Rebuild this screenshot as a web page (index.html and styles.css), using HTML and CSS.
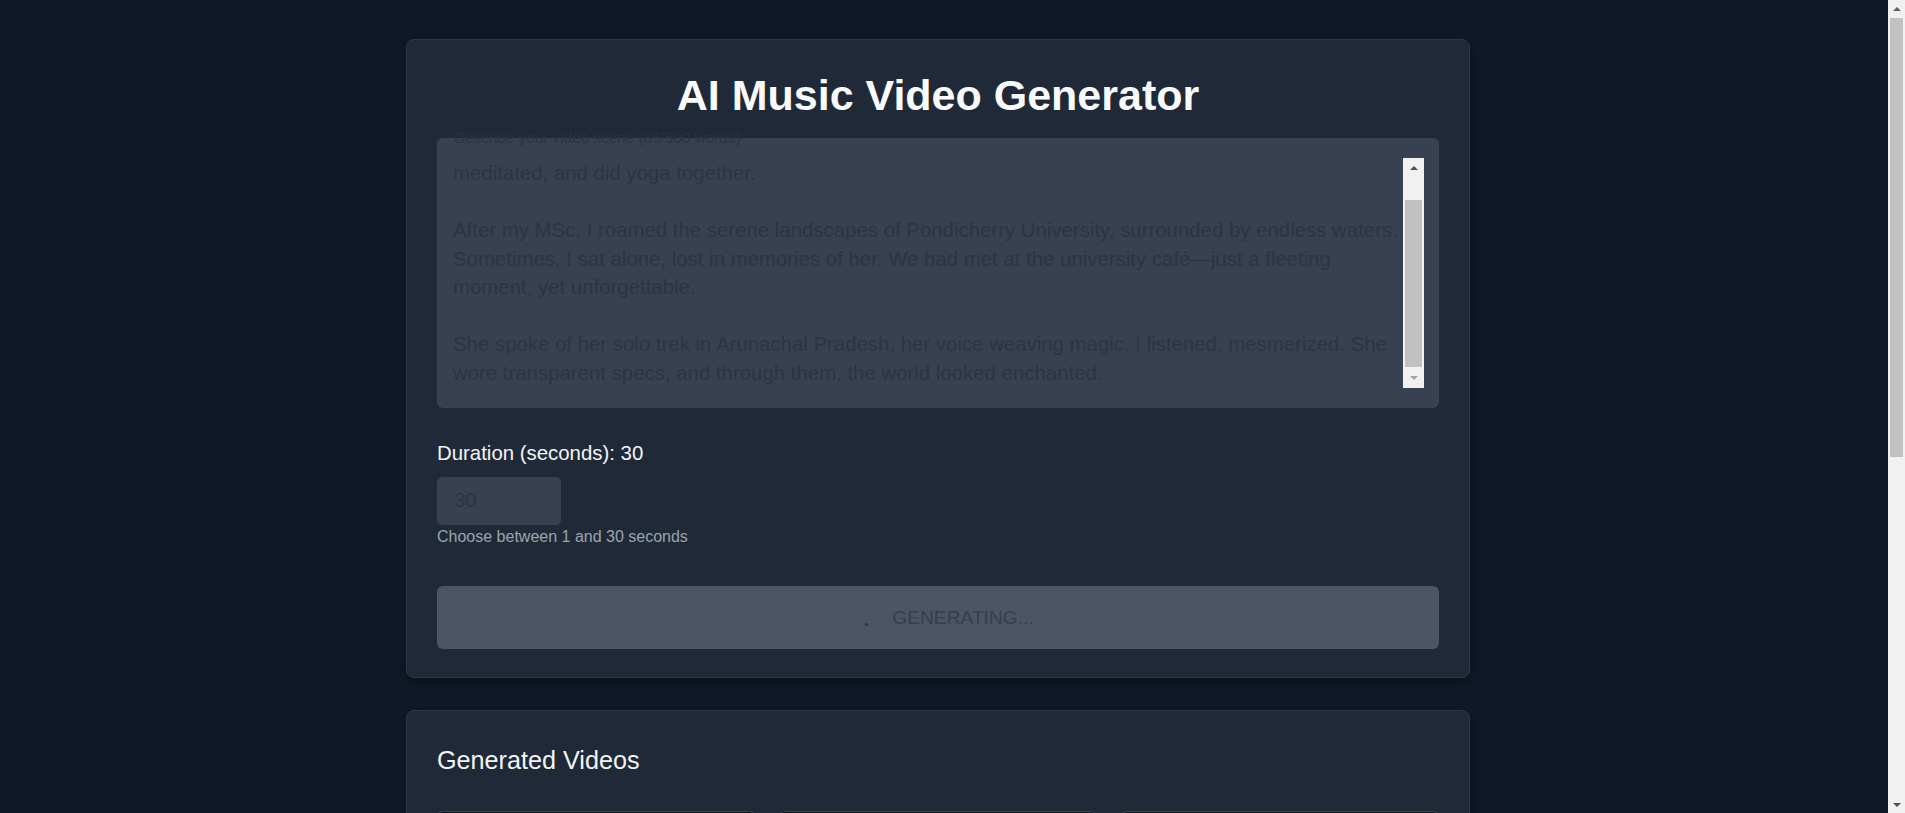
FILE: index.html
```html
<!DOCTYPE html>
<html lang="en">
<head>
<meta charset="utf-8">
<title>AI Music Video Generator</title>
<link rel="stylesheet" href="styles.css">
</head>
<body>
<main class="page">
  <section class="card generator">
    <h1 class="title">AI Music Video Generator</h1>
    <div class="scene-field">
      <label class="scene-label" for="scene">Describe your video scene (85/500 words)</label>
      <textarea id="scene" class="scene">
In those early mornings by the sea, she and I watched the sunrise together, walked, talked, laughed, meditated, and did yoga together.

After my MSc, I roamed the serene landscapes of Pondicherry University, surrounded by endless waters. Sometimes, I sat alone, lost in memories of her. We had met at the university café—just a fleeting moment, yet unforgettable.

She spoke of her solo trek in Arunachal Pradesh, her voice weaving magic. I listened, mesmerized. She wore transparent specs, and through them, the world looked enchanted.</textarea>
      <div class="field-scrollbar" aria-hidden="true">
        <span class="fsb-btn"><span class="arrow-up arrow-dark"></span></span>
        <span class="fsb-track"><span class="fsb-thumb"></span></span>
        <span class="fsb-btn"><span class="arrow-down arrow-light"></span></span>
      </div>
    </div>
    <div class="duration-field">
      <label class="duration-label" for="duration">Duration (seconds): 30</label>
      <input id="duration" class="duration-input" type="number" min="1" max="30" value="30">
      <p class="hint">Choose between 1 and 30 seconds</p>
    </div>
    <button class="generate" type="button"><span class="spinner"></span><span class="generate-text">Generating...</span></button>
  </section>

  <section class="card videos">
    <h2 class="videos-title">Generated Videos</h2>
    <div class="video-grid">
      <article class="video-card"><div class="video-thumb"></div><div class="video-info"><p class="video-title">Sunrise by the sea</p><p class="video-meta">30 seconds</p></div></article>
      <article class="video-card"><div class="video-thumb"></div><div class="video-info"><p class="video-title">Pondicherry University</p><p class="video-meta">30 seconds</p></div></article>
      <article class="video-card"><div class="video-thumb"></div><div class="video-info"><p class="video-title">Arunachal trek</p><p class="video-meta">20 seconds</p></div></article>
      <article class="video-card"><div class="video-thumb"></div><div class="video-info"><p class="video-title">University café</p><p class="video-meta">15 seconds</p></div></article>
      <article class="video-card"><div class="video-thumb"></div><div class="video-info"><p class="video-title">Endless waters</p><p class="video-meta">30 seconds</p></div></article>
      <article class="video-card"><div class="video-thumb"></div><div class="video-info"><p class="video-title">Enchanted world</p><p class="video-meta">25 seconds</p></div></article>
    </div>
  </section>
</main>

<div class="page-scrollbar" aria-hidden="true">
  <span class="psb-btn"><span class="arrow-up-sm arrow-mid"></span></span>
  <span class="psb-track"><span class="psb-thumb"></span></span>
  <span class="psb-btn"><span class="arrow-down-sm arrow-dark"></span></span>
</div>
<script src="script.js"></script>
</body>
</html>
```

FILE: styles.css
```css
* { box-sizing: border-box; }

html { background: #111827; }

body {
  margin: 0;
  background: #111827;
  font-family: "Liberation Sans", Arial, sans-serif;
  font-size: 20.4px;
  line-height: 1.5;
  color: #f3f4f6;
}

.page {
  display: flex;
  flex-direction: column;
  align-items: center;
  gap: 32px;
  padding: 39px 29px 39px 0;
}

.card {
  width: 1064px;
  background: #1f2937;
  border: 1px solid #2e3848;
  border-radius: 8px;
  box-shadow: 0 4px 12px rgba(0, 0, 0, 0.35);
}

.generator { padding: 30px 30px 28px; }

.title {
  margin: 0 0 17.5px;
  font-size: 43px;
  line-height: 50px;
  font-weight: 700;
  text-align: center;
  color: #f9fafb;
}

/* scene textarea */
.scene-field {
  position: relative;
  display: flex;
  background: #374151;
  border-radius: 6px;
  padding: 20px 15px 20px 16px;
}

.scene-label {
  position: absolute;
  top: -8px;
  left: 17px;
  font-size: 15.3px;
  line-height: 16px;
  color: #2b3341;
}

.scene {
  display: block;
  flex: 1;
  min-width: 0;
  height: 230px;
  margin: 0;
  padding: 0;
  border: 0;
  background: transparent;
  resize: none;
  outline: none;
  overflow: hidden;
  font-family: inherit;
  font-size: 20.4px;
  line-height: 1.4;
  color: #2c3442;
}

.field-scrollbar {
  flex: none;
  display: flex;
  flex-direction: column;
  width: 21px;
  height: 230px;
  background: #f1f1f1;
}
.fsb-btn {
  flex: none;
  display: flex;
  align-items: center;
  justify-content: center;
  height: 21px;
}
.fsb-track {
  flex: 1;
  display: flex;
  flex-direction: column;
  padding: 21px 2px 0;
}
.fsb-thumb {
  flex: 1;
  background: #c1c1c1;
}

.arrow-up,
.arrow-down {
  width: 0;
  height: 0;
  border-left: 4.5px solid transparent;
  border-right: 4.5px solid transparent;
}
.arrow-up { border-bottom: 4.5px solid; margin-bottom: 1px; }
.arrow-down { border-top: 4.5px solid; margin-top: 1px; }

.arrow-up-sm,
.arrow-down-sm {
  width: 0;
  height: 0;
  border-left: 4px solid transparent;
  border-right: 4px solid transparent;
}
.arrow-up-sm { border-bottom: 4px solid; }
.arrow-down-sm { border-top: 4px solid; }

.arrow-dark { color: #505050; }
.arrow-mid { color: #606060; }
.arrow-light { color: #a3a3a3; }

/* duration */
.duration-field { margin-top: 30px; }

.duration-label {
  display: block;
  line-height: 30px;
  margin-bottom: 9px;
  color: #f3f4f6;
}

.duration-input {
  display: block;
  width: 124px;
  height: 48px;
  margin: 0;
  padding: 0 16px 0 17px;
  border: 0;
  border-radius: 5px;
  background: #374151;
  color: #2c3442;
  font-family: inherit;
  font-size: 20.4px;
  outline: none;
}

.hint {
  margin: 0;
  font-size: 16px;
  line-height: 24px;
  color: #9ca3af;
}

/* generate button */
.generate {
  display: flex;
  align-items: center;
  justify-content: center;
  width: 100%;
  height: 63px;
  margin: 37.5px 0 0;
  padding: 0;
  border: 0;
  border-radius: 6px;
  background: #4b5563;
  color: #363f4d;
  font-family: inherit;
  font-size: 19.2px;
  text-transform: uppercase;
  cursor: not-allowed;
}

.spinner {
  display: flex;
  align-items: flex-end;
  width: 20px;
  height: 20px;
  margin: 0 15px;
  padding: 0 0 2px 8px;
}
.spinner::before {
  content: "";
  width: 3px;
  height: 3px;
  border-radius: 50%;
  background: #2b323e;
}

/* videos */
.videos { padding: 30px; }

.videos-title {
  margin: 0 0 32px;
  font-size: 25.2px;
  line-height: 38px;
  font-weight: 400;
  color: #f3f4f6;
}

.video-grid {
  display: grid;
  grid-template-columns: repeat(3, 1fr);
  gap: 24px;
}

.video-card {
  background: #2b3544;
  border: 1px solid #374151;
  border-radius: 6px;
  overflow: hidden;
}

.video-thumb {
  aspect-ratio: 16 / 9;
  background: #0f141d;
}

.video-info { padding: 16px; }

.video-title {
  margin: 0 0 4px;
  font-size: 16px;
  line-height: 24px;
  color: #e5e7eb;
}

.video-meta {
  margin: 0;
  font-size: 14px;
  line-height: 20px;
  color: #9ca3af;
}

/* window scrollbar drawn over the right edge */
.page-scrollbar {
  position: fixed;
  top: 0;
  right: 0;
  display: flex;
  flex-direction: column;
  width: 17px;
  height: 100vh;
  background: #f1f1f1;
}
.psb-btn {
  flex: none;
  display: flex;
  align-items: center;
  justify-content: center;
  height: 17px;
}
.psb-track {
  flex: 1;
  display: flex;
  flex-direction: column;
  padding: 1px 2px 0;
}
.psb-thumb {
  height: 439px;
  background: #c1c1c1;
}
```

FILE: script.js
```js
var scene = document.querySelector('.scene');
if (scene) {
  scene.scrollTop = scene.scrollHeight;
}
```
